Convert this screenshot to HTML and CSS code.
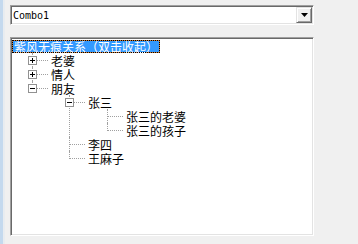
FILE: index.html
```html
<!DOCTYPE html>
<html lang="zh">
<head>
  <meta charset="UTF-8">
  <title>Combo1</title>
  <link rel="stylesheet" href="styles.css">
</head>
<body>
  <div class="window">
    <div class="combo">
      <span class="combo-text">Combo1</span>
      <span class="combo-btn">
        <svg width="7" height="4" viewBox="0 0 7 4"><path d="M0 0h7L3.5 4z" fill="#000"/></svg>
      </span>
    </div>

    <div class="tree">
      <div class="row"><span class="label sel">紫风无痕关系（双击收起）</span></div>
      <ul class="branch lv1">
        <li>
          <div class="row"><span class="toggle plus"></span><span class="label">老婆</span></div>
        </li>
        <li>
          <div class="row"><span class="toggle plus"></span><span class="label">情人</span></div>
        </li>
        <li class="last">
          <div class="row"><span class="toggle minus"></span><span class="label">朋友</span></div>
          <ul class="branch lv2">
            <li>
              <div class="row"><span class="toggle minus"></span><span class="label">张三</span></div>
              <ul class="branch lv3">
                <li><div class="row"><span class="label">张三的老婆</span></div></li>
                <li class="last"><div class="row"><span class="label">张三的孩子</span></div></li>
              </ul>
            </li>
            <li><div class="row"><span class="label">李四</span></div></li>
            <li class="last"><div class="row"><span class="label">王麻子</span></div></li>
          </ul>
        </li>
      </ul>
    </div>
  </div>
</body>
</html>
```

FILE: styles.css
```css
body { margin: 0; background: linear-gradient(to right, #c4d9ee 0 3px, #e8ecf0 3px 5px, #f0f0f0 5px); height: 244px; font-family: "Noto Sans CJK SC", sans-serif; }
.window { padding: 5px 0 0 10px; width: 304px; }

/* combo box */
.combo { display: flex; align-items: center; box-sizing: border-box; height: 20px; background: #fff; border: 1px solid; border-color: #a0a0a0 #fff #fff #a0a0a0; box-shadow: inset 1px 1px #696969, inset -1px -1px #e3e3e3; padding: 1px; }
.combo-text { font-family: "DejaVu Sans Mono", monospace; font-size: 10px; padding-left: 1px; color: #000; }
.combo-btn { margin-left: auto; box-sizing: border-box; width: 16px; height: 16px; display: flex; align-items: center; justify-content: center; background: #f0f0f0; border: 1px solid; border-color: #e3e3e3 #696969 #696969 #e3e3e3; box-shadow: inset 1px 1px #fff, inset -1px -1px #a0a0a0; }

/* tree view */
.tree { margin-top: 12px; box-sizing: border-box; height: 199px; background: #fff; border: 1px solid; border-color: #a0a0a0 #fff #fff #a0a0a0; box-shadow: inset 1px 1px #696969, inset -1px -1px #e3e3e3; padding: 1px; font-size: 12px; color: #000; }
.row { display: flex; align-items: center; height: 14px; }
.label { line-height: 11px; padding: 0 1px; border: 1px solid transparent; white-space: nowrap; }
.label.sel { background: #3399ff; color: #fff; border-color: #d07a30; outline: 1px dotted #000; outline-offset: -1px; }

.branch { list-style: none; margin: 0; padding: 0; }
.lv1 { margin-left: 20px; }
.lv2 { margin-left: 20px; }
.lv3 { margin-left: 21px; }
.branch li { position: relative; padding-left: 17px; }
.branch li::before { content: ""; position: absolute; left: 1px; top: 7px; width: 15px; border-top: 1px dotted #a0a0a0; }
.branch li::after { content: ""; position: absolute; left: 0; top: 0; bottom: 0; border-left: 1px dotted #a0a0a0; }
.branch li.last::after { bottom: auto; height: 8px; }

.toggle { position: absolute; z-index: 1; left: -4px; top: 3px; box-sizing: border-box; width: 9px; height: 9px; border: 1px solid #919191; background: #fff; }
.toggle::before { content: ""; position: absolute; left: 1px; top: 3px; width: 5px; height: 1px; background: #000; }
.toggle.plus::after { content: ""; position: absolute; left: 3px; top: 1px; width: 1px; height: 5px; background: #000; }
```
